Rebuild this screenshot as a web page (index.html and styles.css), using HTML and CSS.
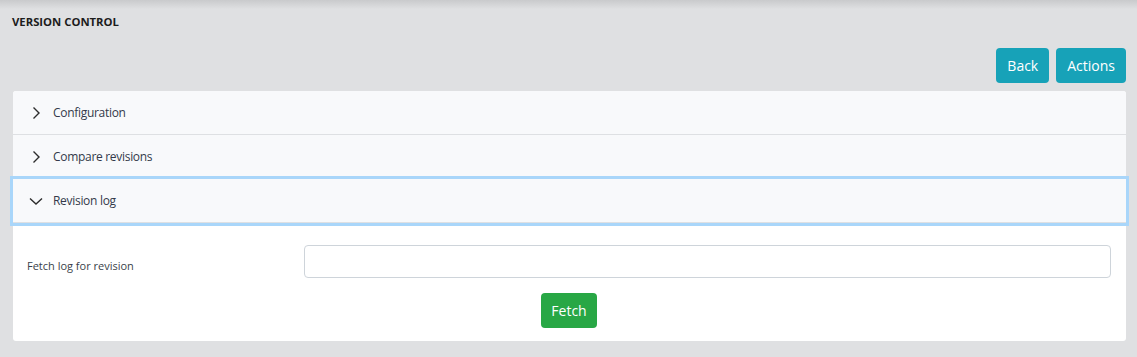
FILE: index.html
```html
<!DOCTYPE html>
<html lang="en">
<head>
  <meta charset="UTF-8" />
  <meta name="viewport" content="width=device-width, initial-scale=1.0" />
  <title>Version Control</title>
  <link rel="stylesheet" href="styles.css">
</head>
<body>
  <div class="page">
    <h1 class="page-title">VERSION CONTROL</h1>

    <div class="toolbar">
      <button class="btn btn-info">Back</button>
      <button class="btn btn-info">Actions</button>
    </div>

    <div class="accordion">
      <div class="acc-item">
        <button class="acc-header">
          <svg class="chevron" viewBox="0 0 16 16" width="16" height="16"><path d="M5.5 2.5 11 8l-5.5 5.5" /></svg>
          Configuration
        </button>
      </div>
      <div class="acc-item">
        <button class="acc-header">
          <svg class="chevron" viewBox="0 0 16 16" width="16" height="16"><path d="M5.5 2.5 11 8l-5.5 5.5" /></svg>
          Compare revisions
        </button>
      </div>
      <div class="acc-item open">
        <button class="acc-header focused">
          <svg class="chevron" viewBox="0 0 16 16" width="16" height="16"><path d="M2 5.5 8 11l6-5.5" /></svg>
          Revision log
        </button>
        <div class="acc-body">
          <div class="form-row">
            <label class="form-label" for="revision">Fetch log for revision</label>
            <input class="form-input" type="text" id="revision" />
          </div>
          <div class="form-actions">
            <button class="btn btn-success">Fetch</button>
          </div>
        </div>
      </div>
    </div>
  </div>
</body>
</html>
```

FILE: styles.css
```css
body {
  margin: 0;
  font-family: "Open Sans", "Noto Sans", sans-serif;
  background: #dfe0e2;
  color: #212529;
}
.page {
  min-height: 357px;
  box-sizing: border-box;
  padding: 14px 11px 0 13px;
  background: linear-gradient(#c9cacc 0, #dfe0e2 9px);
}
.page-title {
  margin: 0 0 0 -1px;
  font-size: 11.3px;
  font-weight: 700;
  line-height: 16px;
  color: #1c1c1c;
}
.toolbar {
  display: flex;
  justify-content: flex-end;
  gap: 7px;
  margin-top: 18px;
  margin-bottom: 8px;
}
.btn {
  font-family: inherit;
  font-size: 14px;
  line-height: 21px;
  height: 35px;
  padding: 0 11px;
  border: none;
  border-radius: 4px;
  color: #fff;
  cursor: pointer;
}
.btn-info {
  background: #17a2b8;
}
.btn-success {
  background: #28a745;
  padding: 0 10px;
}
.accordion {
  background: #fff;
  border-radius: 3px;
}
.acc-header {
  display: flex;
  align-items: center;
  gap: 9px;
  width: 100%;
  height: 44px;
  padding: 0 0 0 15px;
  border: none;
  border-bottom: 1px solid #dee0e3;
  background: #f8f9fb;
  font-family: inherit;
  font-size: 12px;
  letter-spacing: -0.3px;
  color: #33394a;
  text-align: left;
  cursor: pointer;
}
.acc-item:first-child .acc-header {
  border-radius: 3px 3px 0 0;
}
.acc-header.focused {
  position: relative;
  box-shadow: 0 0 0 3px #a9d6fa;
}
.chevron {
  fill: none;
  stroke: #2c2c2c;
  stroke-width: 1.4;
}
.acc-body {
  padding: 22px 15px 13px 14px;
}
.form-row {
  display: grid;
  grid-template-columns: 277px 1fr;
  align-items: center;
}
.form-label {
  font-size: 11px;
  color: #3a3f4a;
  padding-top: 8px;
}
.form-input {
  height: 33px;
  box-sizing: border-box;
  border: 1px solid #ced4da;
  border-radius: 4px;
  font-family: inherit;
  font-size: 14px;
  padding: 0 10px;
}
.form-actions {
  display: flex;
  justify-content: center;
  margin-top: 15px;
}
```
